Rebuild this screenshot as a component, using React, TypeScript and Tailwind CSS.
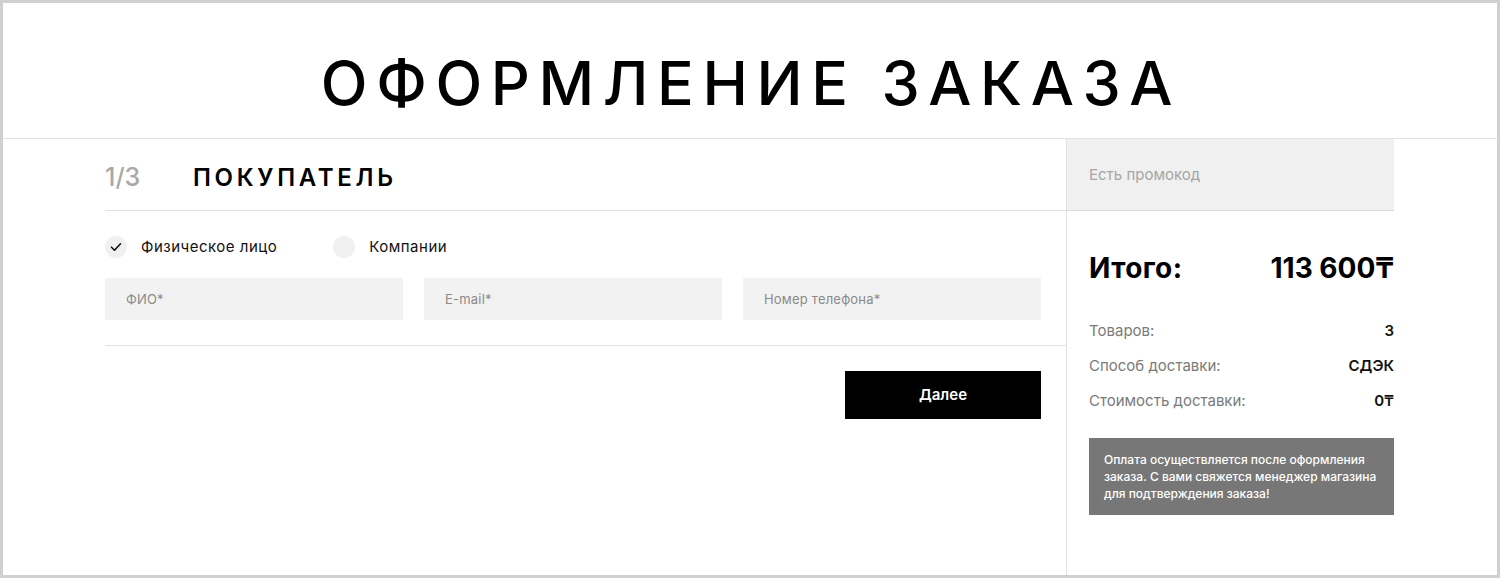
import React from "react";

const font = { fontFamily: '"Inter", "Noto Sans", "DejaVu Sans", sans-serif' };

function Radio({ label, checked }: { label: string; checked?: boolean }) {
  return (
    <label className="flex items-center gap-[14px] cursor-pointer">
      <span className="flex h-[22px] w-[22px] items-center justify-center rounded-full bg-[#f0f0f0]">
        {checked && (
          <svg width="12" height="10" viewBox="0 0 12 10" fill="none">
            <path d="M1.5 5.2 4.5 8.2 10.5 1.8" stroke="#111" strokeWidth="1.6" strokeLinecap="round" strokeLinejoin="round" />
          </svg>
        )}
      </span>
      <span className="text-[15px] leading-[22px] tracking-[0.5px] text-[#111]">{label}</span>
    </label>
  );
}

function Field({ placeholder }: { placeholder: string }) {
  return (
    <input
      placeholder={placeholder}
      className="h-[42px] w-full bg-[#f2f2f2] px-[21px] text-[13px] tracking-[0.2px] text-[#333] placeholder:text-[#8a8a8a] outline-none"
    />
  );
}

function Row({ label, value }: { label: string; value: string }) {
  return (
    <div className="flex h-[35px] items-center justify-between text-[15px]">
      <span className="text-[#7a7a7a]">{label}</span>
      <span className="font-semibold text-[#111]">{value}</span>
    </div>
  );
}

export default function App() {
  return (
    <div className="h-[578px] w-[1500px] overflow-hidden border-[3px] border-[#d0d0d0] bg-white" style={font}>
      {/* Page title */}
      <header className="h-[136px] border-b border-[#e2e2e2] pt-[50px] text-center">
        <h1 className="pl-[2px] text-[61px] font-medium leading-none tracking-[8.6px] text-black">
          ОФОРМЛЕНИЕ ЗАКАЗА
        </h1>
      </header>

      <div className="flex h-[436px]">
        {/* Checkout steps */}
        <section className="flex-1 pl-[102px]">
          <div className="flex h-[72px] items-center border-b border-[#e2e2e2] pt-[6px]">
            <span className="w-[88px] text-[25px] font-medium text-[#a8a8a8]">1/3</span>
            <span className="text-[24px] font-semibold tracking-[3.7px] text-black">ПОКУПАТЕЛЬ</span>
          </div>

          <div className="border-b border-[#e2e2e2] pb-[25px] pr-[25px]">
            <div className="mt-[25px] flex items-center gap-[56px]">
              <Radio label="Физическое лицо" checked />
              <Radio label="Компании" />
            </div>
            <div className="mt-[20px] grid grid-cols-3 gap-[21px]">
              <Field placeholder="ФИО*" />
              <Field placeholder="E-mail*" />
              <Field placeholder="Номер телефона*" />
            </div>
          </div>

          <div className="flex justify-end pr-[25px] pt-[25px]">
            <button className="h-[48px] w-[196px] bg-black text-[15px] font-semibold text-white">
              Далее
            </button>
          </div>
        </section>

        {/* Order summary */}
        <aside className="w-[431px] border-l border-[#e2e2e2] pr-[103px]">
          <div className="flex h-[72px] items-center border-b border-[#dcdcdc] bg-[#f0f0f0] px-[22px] pt-[2px] text-[15px] text-[#a5a5a5]">
            Есть промокод
          </div>

          <div className="pl-[22px]">
            <div className="mt-[41px] flex items-center justify-between text-[28px] font-bold leading-[32px] text-black">
              <span className="tracking-[0.4px]">Итого:</span>
              <span>113 600₸</span>
            </div>

            <div className="mt-[30px]">
              <Row label="Товаров:" value="3" />
              <Row label="Способ доставки:" value="СДЭК" />
              <Row label="Стоимость доставки:" value="0₸" />
            </div>

            <div className="mt-[19px] bg-[#777777] px-[15px] py-[13px] text-[12px] font-medium leading-[17px] text-white">
              Оплата осуществляется после оформления
              <br />
              заказа. С вами свяжется менеджер магазина
              <br />
              для подтверждения заказа!
            </div>
          </div>
        </aside>
      </div>
    </div>
  );
}
